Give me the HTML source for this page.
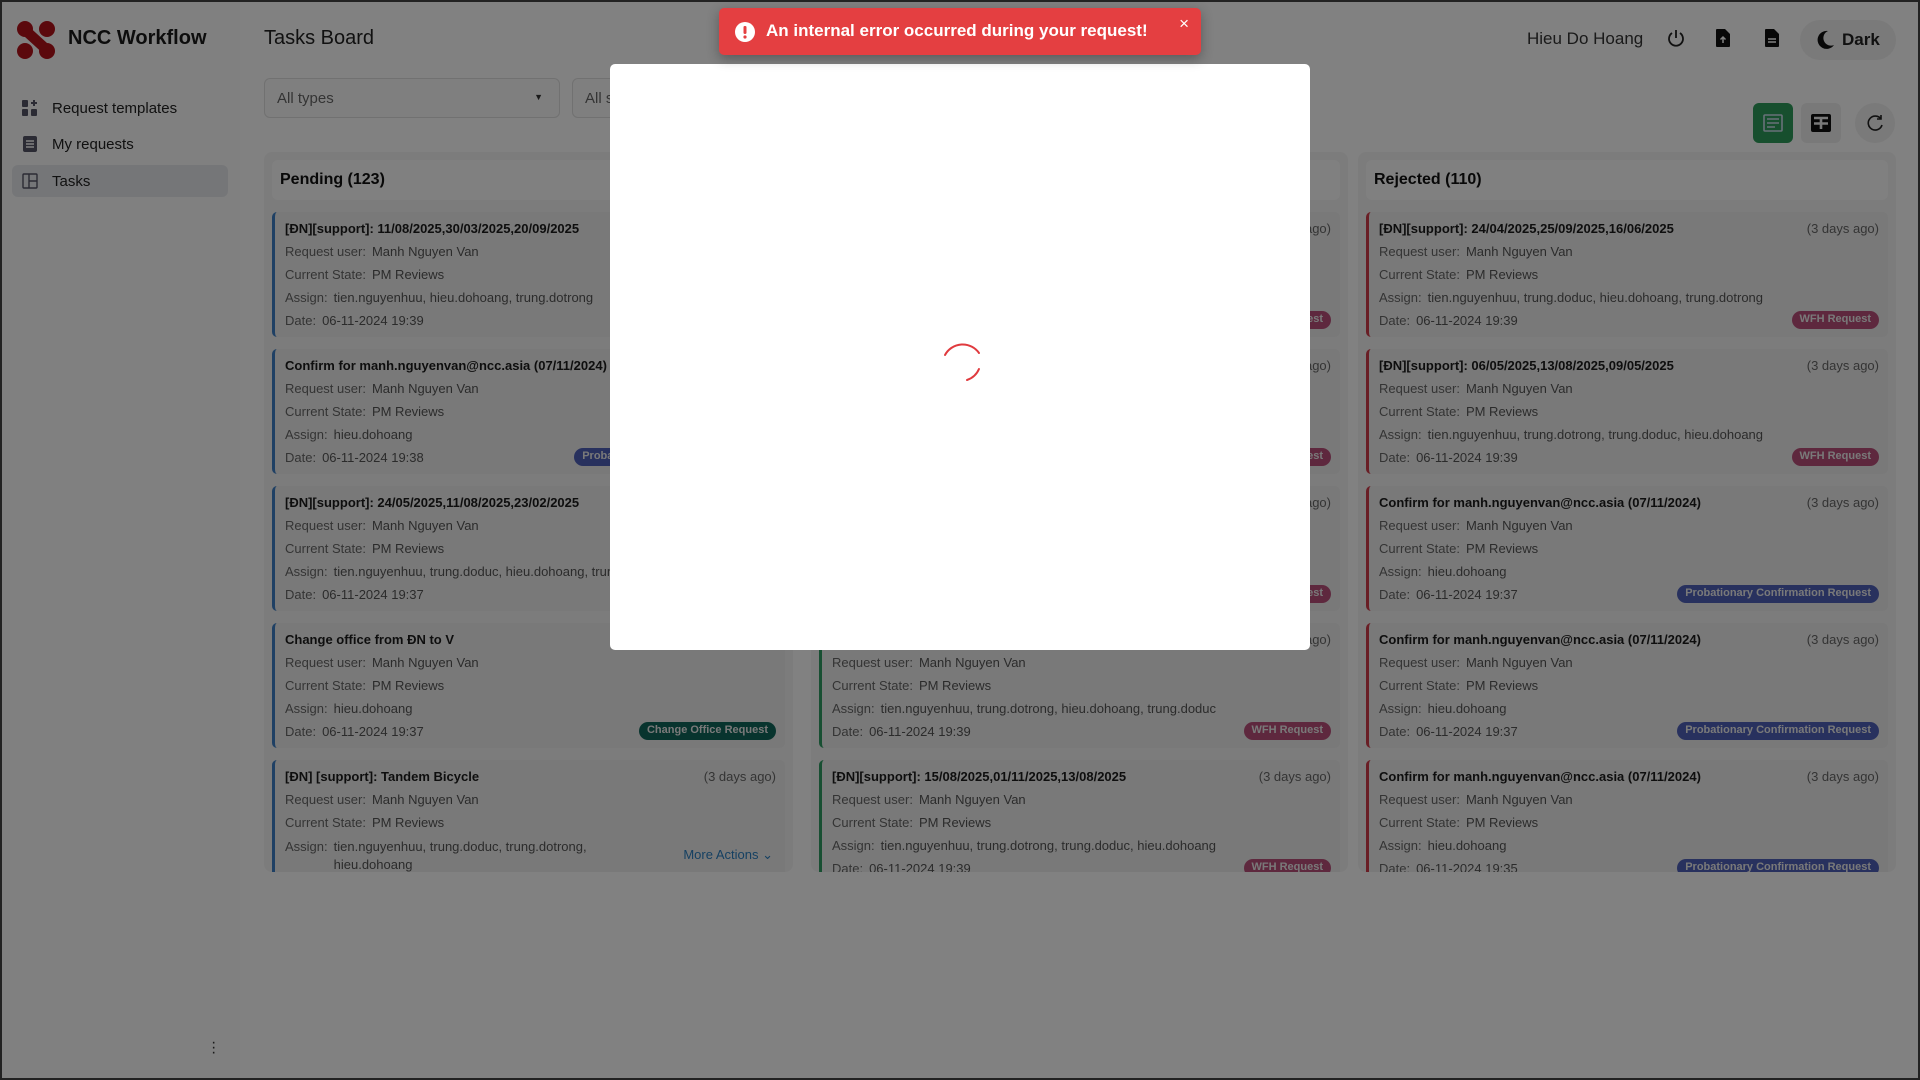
<!DOCTYPE html>
<html><head><meta charset="utf-8"><style>
*{box-sizing:border-box;margin:0;padding:0}
body{width:1920px;height:1080px;overflow:hidden;font-family:"Liberation Sans",sans-serif;background:#fdfdfd;position:relative;color:#222}
.frame{position:absolute;inset:0;border:2px solid #222;z-index:50;pointer-events:none}
.side{position:absolute;left:0;top:0;width:240px;height:1080px;background:#fbfbfb}
.logo{position:absolute;left:16px;top:20px}
.brand{position:absolute;left:68px;top:27px;font-size:20px;font-weight:bold;color:#1a1a1a}
.nav{position:absolute;left:12px;width:216px;height:32px;border-radius:6px;font-size:15px;color:#222;display:flex;align-items:center;padding-left:40px}
.nav svg{position:absolute;left:10px;top:8px}
.title{position:absolute;left:264px;top:27px;font-size:20px;font-weight:500;color:#222}
.sel{position:absolute;top:78px;height:40px;border:1px solid #ddd;border-radius:6px;background:#fafafa;font-size:15px;color:#666;padding:11px 12px}
.col{position:absolute;top:152px;height:720px;background:#f4f4f4;border-radius:8px;overflow:hidden}
.colh{margin:8px 8px 12px 8px;height:40px;background:#fcfcfc;border-radius:6px;font-size:16px;font-weight:bold;padding:11px 8px;color:#111}
.card{position:relative;margin:0 8px 12px 8px;height:125px;background:#eeeeee;border-radius:5px;border-left:3px solid #3d7fc4;padding:9px 8px 0 10px;font-size:13px;color:#666}
.card .t{font-weight:bold;color:#1c1c1c;height:23px}
.card .ago{position:absolute;right:9px;top:9px;color:#666}
.card div.l{height:23px}
.card .l span{color:#555;margin-left:6px}
.badge{position:absolute;right:9px;bottom:8px;height:18px;border-radius:9px;font-size:11px;font-weight:bold;color:#eee;padding:2px 8px}
.wfh{background:#b8507a}.pro{background:#5060b8}.cho{background:#11665a}
.g{border-left-color:#2f9c62}.r{border-left-color:#cf3c4a}
.ov{position:absolute;inset:0;background:rgba(0,0,0,0.49);z-index:10}
.modal{position:absolute;left:610px;top:64px;width:700px;height:586px;background:#fff;border-radius:5px;z-index:20}
.toast{position:absolute;left:719px;top:8px;width:482px;height:47px;background:#e43f41;border-radius:5px;z-index:30;color:#fff;font-weight:bold;font-size:17px;box-shadow:0 4px 12px rgba(0,0,0,.3)}
</style></head><body>
<div class="side">
 <svg class="logo" width="40" height="40" viewBox="0 0 40 40"><g fill="#b3121b"><circle cx="9" cy="9" r="8"/><circle cx="31" cy="9" r="8"/><circle cx="9" cy="31" r="8"/><circle cx="31" cy="31" r="8"/><path d="M9 3 L31 23 L31 37 L9 17Z"/></g></svg>
 <div class="brand">NCC Workflow</div>
 <div class="nav" style="top:92px"><svg width="16" height="16" viewBox="0 0 16 16" fill="#556"><rect x="0" y="0" width="6" height="7" rx="1"/><rect x="0" y="9" width="6" height="7" rx="1"/><rect x="9" y="9" width="6" height="7" rx="1"/><path d="M11 0h2v2h2v2h-2v2h-2v-2h-2v-2h2z"/></svg>Request templates</div>
 <div class="nav" style="top:128px"><svg width="16" height="16" viewBox="0 0 16 16"><rect x="1" y="0" width="14" height="16" rx="2" fill="#556"/><path d="M4 5h8M4 8h8M4 11h8" stroke="#fff" stroke-width="1.4"/></svg>My requests</div>
 <div class="nav" style="top:165px;background:#e6e8ec"><svg width="16" height="16" viewBox="0 0 16 16" fill="none" stroke="#556" stroke-width="1.4"><rect x="1" y="1" width="14" height="14" rx="1"/><path d="M7 1v14M7 8h8"/></svg>Tasks</div>
 <div style="position:absolute;left:211px;top:1040px;color:#333;font-size:16px;line-height:5px">·<br>·<br>·</div>
</div>
<div class="title">Tasks Board</div>
<div class="sel" style="left:264px;width:296px">All types<span style="position:absolute;right:16px;top:13px;font-size:9px;color:#333">▼</span></div>
<div class="sel" style="left:572px;width:200px">All s</div>
<div style="position:absolute;left:1527px;top:29px;font-size:17px;color:#333">Hieu Do Hoang</div>
<svg style="position:absolute;left:1667px;top:29px" width="18" height="18" viewBox="0 0 18 18" fill="none" stroke="#222" stroke-width="1.8"><path d="M9 1v8M5 4a7 7 0 1 0 8 0"/></svg>
<svg style="position:absolute;left:1716px;top:29px" width="14" height="18" viewBox="0 0 14 18"><path d="M0 1a1 1 0 0 1 1-1h8l5 5v12a1 1 0 0 1-1 1H1a1 1 0 0 1-1-1z" fill="#111"/><path d="M7 14V8M4.5 10.5L7 8l2.5 2.5" stroke="#fff" stroke-width="1.5" fill="none"/></svg>
<svg style="position:absolute;left:1765px;top:29px" width="14" height="18" viewBox="0 0 14 18"><path d="M0 1a1 1 0 0 1 1-1h8l5 5v12a1 1 0 0 1-1 1H1a1 1 0 0 1-1-1z" fill="#111"/><path d="M3 10h8M3 13h8" stroke="#fff" stroke-width="1.5"/></svg>
<div style="position:absolute;left:1800px;top:20px;width:96px;height:40px;border-radius:20px;background:#efefef;font-size:17px;font-weight:bold;color:#222;padding:10px 0 0 42px">Dark<svg style="position:absolute;left:17px;top:10px" width="18" height="19" viewBox="0 0 18 19"><path d="M11 1A9 9 0 1 0 17 15 7.5 7.5 0 0 1 11 1z" fill="#111"/></svg></div>
<div style="position:absolute;left:1753px;top:103px;width:40px;height:40px;border-radius:6px;background:#2e9b5a"><svg style="position:absolute;left:10px;top:11px" width="20" height="18" viewBox="0 0 20 18" fill="none" stroke="#cde" stroke-width="1.6"><rect x="1" y="1" width="18" height="16" rx="1"/><path d="M4 5h12M4 9h12M4 13h8"/></svg></div>
<div style="position:absolute;left:1801px;top:103px;width:40px;height:40px;border-radius:6px;background:#eeeeee"><svg style="position:absolute;left:10px;top:11px" width="20" height="18" viewBox="0 0 20 18"><rect x="0" y="0" width="20" height="18" rx="2" fill="#111"/><path d="M3 4h14M10 4v11M3 9.5h14" stroke="#eee" stroke-width="2.6"/></svg></div>
<div style="position:absolute;left:1855px;top:103px;width:40px;height:40px;border-radius:20px;background:#f0f0f0"><svg style="position:absolute;left:11px;top:11px" width="18" height="18" viewBox="0 0 18 18" fill="none" stroke="#222" stroke-width="1.6"><path d="M15 5A7 7 0 1 0 16 11"/><path d="M15 1v4h-4"/></svg></div>

<div class="col" style="left:264px;width:529px">
 <div class="colh">Pending (123)</div>
 <div class="card"><div class="t">[ĐN][support]: 11/08/2025,30/03/2025,20/09/2025</div><span class="ago">(3 days ago)</span><div class="l">Request user:<span>Manh Nguyen Van</span></div><div class="l">Current State:<span>PM Reviews</span></div><div class="l">Assign:<span>tien.nguyenhuu, hieu.dohoang, trung.dotrong</span></div><div class="l">Date:<span>06-11-2024 19:39</span></div><div class="badge wfh">WFH Request</div></div>
 <div class="card"><div class="t">Confirm for manh.nguyenvan@ncc.asia (07/11/2024)</div><span class="ago">(3 days ago)</span><div class="l">Request user:<span>Manh Nguyen Van</span></div><div class="l">Current State:<span>PM Reviews</span></div><div class="l">Assign:<span>hieu.dohoang</span></div><div class="l">Date:<span>06-11-2024 19:38</span></div><div class="badge pro">Probationary Confirmation Request</div></div>
 <div class="card"><div class="t">[ĐN][support]: 24/05/2025,11/08/2025,23/02/2025</div><span class="ago">(3 days ago)</span><div class="l">Request user:<span>Manh Nguyen Van</span></div><div class="l">Current State:<span>PM Reviews</span></div><div class="l">Assign:<span>tien.nguyenhuu, trung.doduc, hieu.dohoang, trung.dotrong</span></div><div class="l">Date:<span>06-11-2024 19:37</span></div><div class="badge wfh">WFH Request</div></div>
 <div class="card"><div class="t">Change office from ĐN to V</div><span class="ago">(3 days ago)</span><div class="l">Request user:<span>Manh Nguyen Van</span></div><div class="l">Current State:<span>PM Reviews</span></div><div class="l">Assign:<span>hieu.dohoang</span></div><div class="l">Date:<span>06-11-2024 19:37</span></div><div class="badge cho">Change Office Request</div></div>
 <div class="card" style="height:140px"><div class="t">[ĐN] [support]: Tandem Bicycle</div><span class="ago">(3 days ago)</span><div class="l">Request user:<span>Manh Nguyen Van</span></div><div class="l">Current State:<span>PM Reviews</span></div><div style="display:flex;line-height:18px">Assign:<span style="margin-left:6px;color:#555">tien.nguyenhuu, trung.doduc, trung.dotrong,<br>hieu.dohoang</span></div><div style="position:absolute;right:12px;top:87px;color:#2a7fc0">More Actions ⌄</div></div>
</div>
<div class="col" style="left:811px;width:537px">
 <div class="colh">Approved (98)</div>
 <div class="card g"><div class="t">[ĐN][support]: 10/08/2025</div><span class="ago">(3 days ago)</span><div class="l">Request user:<span>Manh Nguyen Van</span></div><div class="l">Current State:<span>PM Reviews</span></div><div class="l">Assign:<span>hieu.dohoang</span></div><div class="l">Date:<span>06-11-2024 19:39</span></div><div class="badge wfh">WFH Request</div></div>
 <div class="card g"><div class="t">[ĐN][support]</div><span class="ago">(3 days ago)</span><div class="l">Request user:<span>Manh Nguyen Van</span></div><div class="l">Current State:<span>PM Reviews</span></div><div class="l">Assign:<span>hieu.dohoang</span></div><div class="l">Date:<span>06-11-2024 19:39</span></div><div class="badge wfh">WFH Request</div></div>
 <div class="card g"><div class="t">[ĐN][support]</div><span class="ago">(3 days ago)</span><div class="l">Request user:<span>Manh Nguyen Van</span></div><div class="l">Current State:<span>PM Reviews</span></div><div class="l">Assign:<span>hieu.dohoang</span></div><div class="l">Date:<span>06-11-2024 19:39</span></div><div class="badge wfh">WFH Request</div></div>
 <div class="card g"><div class="t">[ĐN][support]</div><span class="ago">(3 days ago)</span><div class="l">Request user:<span>Manh Nguyen Van</span></div><div class="l">Current State:<span>PM Reviews</span></div><div class="l">Assign:<span>tien.nguyenhuu, trung.dotrong, hieu.dohoang, trung.doduc</span></div><div class="l">Date:<span>06-11-2024 19:39</span></div><div class="badge wfh">WFH Request</div></div>
 <div class="card g"><div class="t">[ĐN][support]: 15/08/2025,01/11/2025,13/08/2025</div><span class="ago">(3 days ago)</span><div class="l">Request user:<span>Manh Nguyen Van</span></div><div class="l">Current State:<span>PM Reviews</span></div><div class="l">Assign:<span>tien.nguyenhuu, trung.dotrong, trung.doduc, hieu.dohoang</span></div><div class="l">Date:<span>06-11-2024 19:39</span></div><div class="badge wfh">WFH Request</div></div>
</div>
<div class="col" style="left:1358px;width:538px">
 <div class="colh">Rejected (110)</div>
 <div class="card r"><div class="t">[ĐN][support]: 24/04/2025,25/09/2025,16/06/2025</div><span class="ago">(3 days ago)</span><div class="l">Request user:<span>Manh Nguyen Van</span></div><div class="l">Current State:<span>PM Reviews</span></div><div class="l">Assign:<span>tien.nguyenhuu, trung.doduc, hieu.dohoang, trung.dotrong</span></div><div class="l">Date:<span>06-11-2024 19:39</span></div><div class="badge wfh">WFH Request</div></div>
 <div class="card r"><div class="t">[ĐN][support]: 06/05/2025,13/08/2025,09/05/2025</div><span class="ago">(3 days ago)</span><div class="l">Request user:<span>Manh Nguyen Van</span></div><div class="l">Current State:<span>PM Reviews</span></div><div class="l">Assign:<span>tien.nguyenhuu, trung.dotrong, trung.doduc, hieu.dohoang</span></div><div class="l">Date:<span>06-11-2024 19:39</span></div><div class="badge wfh">WFH Request</div></div>
 <div class="card r"><div class="t">Confirm for manh.nguyenvan@ncc.asia (07/11/2024)</div><span class="ago">(3 days ago)</span><div class="l">Request user:<span>Manh Nguyen Van</span></div><div class="l">Current State:<span>PM Reviews</span></div><div class="l">Assign:<span>hieu.dohoang</span></div><div class="l">Date:<span>06-11-2024 19:37</span></div><div class="badge pro">Probationary Confirmation Request</div></div>
 <div class="card r"><div class="t">Confirm for manh.nguyenvan@ncc.asia (07/11/2024)</div><span class="ago">(3 days ago)</span><div class="l">Request user:<span>Manh Nguyen Van</span></div><div class="l">Current State:<span>PM Reviews</span></div><div class="l">Assign:<span>hieu.dohoang</span></div><div class="l">Date:<span>06-11-2024 19:37</span></div><div class="badge pro">Probationary Confirmation Request</div></div>
 <div class="card r"><div class="t">Confirm for manh.nguyenvan@ncc.asia (07/11/2024)</div><span class="ago">(3 days ago)</span><div class="l">Request user:<span>Manh Nguyen Van</span></div><div class="l">Current State:<span>PM Reviews</span></div><div class="l">Assign:<span>hieu.dohoang</span></div><div class="l">Date:<span>06-11-2024 19:35</span></div><div class="badge pro">Probationary Confirmation Request</div></div>
</div>

<div class="ov"></div>
<div class="modal"><svg style="position:absolute;left:329px;top:275px" width="44" height="44" viewBox="0 0 44 44" fill="none" stroke="#e03a3e" stroke-width="2" stroke-linecap="round"><path d="M6 16A20 20 0 0 1 40 14M40 30A20 20 0 0 1 28 41"/></svg></div>
<div class="toast"><svg style="position:absolute;left:16px;top:14px" width="20" height="20" viewBox="0 0 20 20"><circle cx="10" cy="10" r="10" fill="#fff"/><rect x="8.5" y="4" width="3" height="8" rx="1.2" fill="#e43f41"/><circle cx="10" cy="15" r="1.6" fill="#e43f41"/></svg><span style="position:absolute;left:47px;top:13px">An internal error occurred during your request!</span><span style="position:absolute;right:12px;top:6px;font-weight:normal;font-size:17px">×</span></div>
<div class="frame"></div>
</body></html>
